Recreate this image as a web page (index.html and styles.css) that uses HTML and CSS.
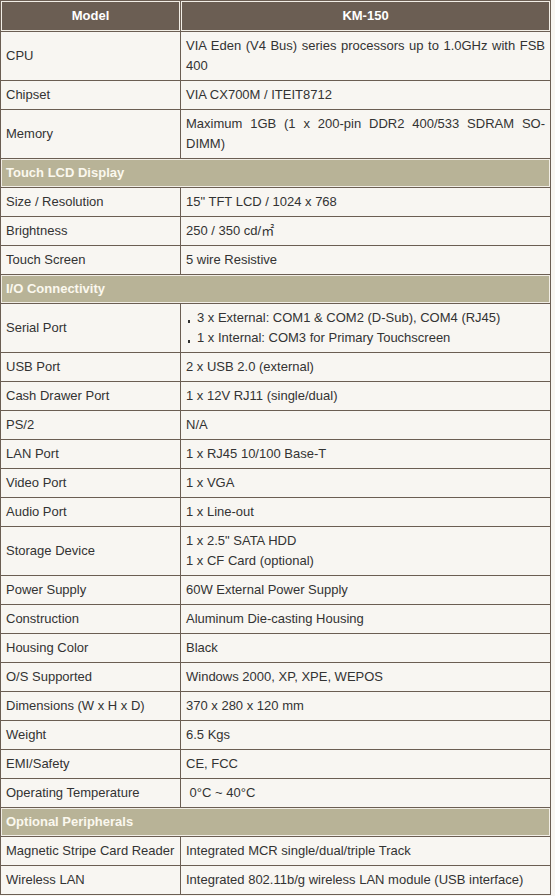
FILE: index.html
```html
<!DOCTYPE html>
<html>
<head>
<meta charset="utf-8">
<link rel="stylesheet" href="styles.css">
</head>
<body>
<table class="spec">
  <colgroup><col class="c1"><col class="c2"></colgroup>
  <thead>
    <tr><th>Model</th><th>KM-150</th></tr>
  </thead>
  <tbody>
    <tr><td>CPU</td><td class="val">VIA Eden (V4 Bus) series processors up to 1.0GHz with FSB 400</td></tr>
    <tr><td>Chipset</td><td class="val">VIA CX700M / ITEIT8712</td></tr>
    <tr><td>Memory</td><td class="val">Maximum 1GB (1 x 200-pin DDR2 400/533 SDRAM SO-DIMM)</td></tr>
    <tr class="sec"><td colspan="2">Touch LCD Display</td></tr>
    <tr><td>Size / Resolution</td><td class="val">15" TFT LCD / 1024 x 768</td></tr>
    <tr><td>Brightness</td><td class="val">250 / 350 cd/㎡</td></tr>
    <tr><td>Touch Screen</td><td class="val">5 wire Resistive</td></tr>
    <tr class="sec"><td colspan="2">I/O Connectivity</td></tr>
    <tr><td>Serial Port</td><td class="val">
      <ul class="bul">
        <li>3 x External: COM1 &amp; COM2 (D-Sub), COM4 (RJ45)</li>
        <li>1 x Internal: COM3 for Primary Touchscreen</li>
      </ul>
    </td></tr>
    <tr><td>USB Port</td><td class="val">2 x USB 2.0 (external)</td></tr>
    <tr><td>Cash Drawer Port</td><td class="val">1 x 12V RJ11 (single/dual)</td></tr>
    <tr><td>PS/2</td><td class="val">N/A</td></tr>
    <tr><td>LAN Port</td><td class="val">1 x RJ45 10/100 Base-T</td></tr>
    <tr><td>Video Port</td><td class="val">1 x VGA</td></tr>
    <tr><td>Audio Port</td><td class="val">1 x Line-out</td></tr>
    <tr><td>Storage Device</td><td class="val">1 x 2.5" SATA HDD<br>1 x CF Card (optional)</td></tr>
    <tr><td>Power Supply</td><td class="val">60W External Power Supply</td></tr>
    <tr><td>Construction</td><td class="val">Aluminum Die-casting Housing</td></tr>
    <tr><td>Housing Color</td><td class="val">Black</td></tr>
    <tr><td>O/S Supported</td><td class="val">Windows 2000, XP, XPE, WEPOS</td></tr>
    <tr><td>Dimensions (W x H x D)</td><td class="val">370 x 280 x 120 mm</td></tr>
    <tr><td>Weight</td><td class="val">6.5 Kgs</td></tr>
    <tr><td>EMI/Safety</td><td class="val">CE, FCC</td></tr>
    <tr><td>Operating Temperature</td><td class="val">&nbsp;0°C ~ 40°C</td></tr>
    <tr class="sec"><td colspan="2">Optional Peripherals</td></tr>
    <tr><td>Magnetic Stripe Card Reader</td><td class="val">Integrated MCR single/dual/triple Track</td></tr>
    <tr><td>Wireless LAN</td><td class="val">Integrated 802.11b/g wireless LAN module (USB interface)</td></tr>
  </tbody>
</table>
</body>
</html>
```
FILE: styles.css
```css
html, body {
  margin: 0;
  padding: 0;
  background: #f8f6f2;
}
.spec {
  width: 551px;
  table-layout: fixed;
  border-collapse: separate;
  border-spacing: 0;
  border-top: 1px solid #6b5e53;
  border-left: 1px solid #6b5e53;
  font-family: "Liberation Sans", Arial, "Noto Sans CJK SC", sans-serif;
  font-size: 13px;
  line-height: 20px;
  color: #333333;
  background: #f8f6f2;
}
.c1 { width: 180px; }
.c2 { width: 370px; }
.spec th, .spec td {
  border-right: 1px solid #6b5e53;
  border-bottom: 1px solid #6b5e53;
  padding: 4px 5px;
  vertical-align: middle;
}
.spec th {
  background: #6b5e53;
  color: #ffffff;
  font-weight: bold;
  text-align: center;
  box-shadow: inset 0 0 0 1px #f2eee6;
  padding: 5px 5px;
}
.spec td { text-align: left; }
.spec td.val { text-align: justify; }
.sec td {
  background: #b8b397;
  color: #fbf8ee;
  font-weight: bold;
  box-shadow: inset 0 0 0 1px #f2eee6;
}
.bul {
  list-style: none;
  margin: 0;
  padding: 0;
}
.bul li {
  position: relative;
  padding-left: 11px;
}
.bul li::before {
  content: "";
  position: absolute;
  left: 2px;
  top: 12px;
  width: 2px;
  height: 3px;
  background: #333333;
}
```
